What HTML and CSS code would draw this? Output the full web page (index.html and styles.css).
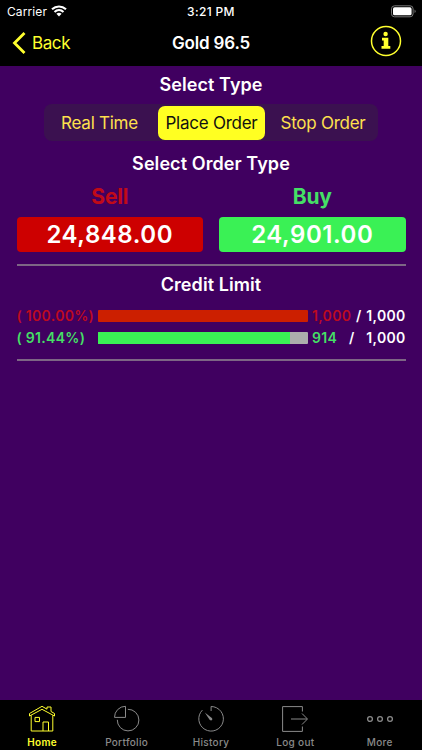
FILE: index.html
```
<!DOCTYPE html>
<html lang="en">
<head>
    <meta charset="UTF-8">
    <meta name="viewport" content="width=device-width, initial-scale=1.0">
    <title>Gold 96.5</title>
    <link rel="stylesheet" href="styles.css">
</head>
<body>
    <header>
        <div class="status-bar">
            <div class="carrier">
                <span>Carrier</span>
                <svg width="16" height="12" viewBox="0 0 16 12" fill="none" stroke="#fff" stroke-width="2.1">
                    <path d="M1 4.3C5 .5 11 .5 15 4.3M3.5 7C6.2 4.5 9.8 4.5 12.5 7"/>
                    <path d="M5.4 8.8C7 7.5 9 7.5 10.6 8.8L8 11.5Z" fill="#fff" stroke="none"/>
                </svg>
            </div>
            <span class="time">3:21 PM</span>
            <svg class="battery" width="26" height="13" viewBox="0 0 26 13">
                <rect x=".5" y=".8" width="21.6" height="11" rx="3" fill="none" stroke="#777"/>
                <rect x="2" y="2.3" width="18.6" height="8" rx="1.6" fill="#fff"/>
                <path d="M23.6 4.5q2 1.8 0 3.6z" fill="#888"/>
            </svg>
        </div>
        <nav class="nav-bar">
            <a class="back" href="#">
                <svg width="14" height="22" viewBox="0 0 14 22" fill="none" stroke="#ffff2e" stroke-width="2.8">
                    <path d="M12.5 1L2.5 11L12.5 21"/>
                </svg>
                <span>Back</span>
            </a>
            <h1>Gold 96.5</h1>
            <a class="info" href="#">
                <svg width="32" height="32" viewBox="0 0 32 32">
                    <circle cx="16" cy="16" r="14.5" fill="none" stroke="#ffff2e" stroke-width="1.5"/>
                    <circle cx="15.6" cy="9" r="2.2" fill="#ffff2e"/>
                    <path d="M12 12.8h6.3v8.2h2v2.7h-8.8V21h2.2v-5.5H12z" fill="#ffff2e"/>
                </svg>
            </a>
        </nav>
    </header>

    <main>
        <h2 class="type-title">Select Type</h2>
        <div class="segments">
            <a class="segment real" href="#">Real Time</a>
            <a class="segment active" href="#">Place Order</a>
            <a class="segment stop" href="#">Stop Order</a>
        </div>

        <h2 class="order-title">Select Order Type</h2>
        <div class="prices">
            <div class="price sell">
                <h3>Sell</h3>
                <a class="button" href="#">24,848.00</a>
            </div>
            <div class="price buy">
                <h3>Buy</h3>
                <a class="button" href="#">24,901.00</a>
            </div>
        </div>

        <section class="credit">
            <h2>Credit Limit</h2>
            <div class="limit red">
                <span class="percent">( 100.00%)</span>
                <div class="bar"><div class="fill" style="width: 100%"></div></div>
                <span class="used">1,000</span>
                <span class="slash">/</span>
                <span class="total">1,000</span>
            </div>
            <div class="limit green">
                <span class="percent">( 91.44%)</span>
                <div class="bar"><div class="fill" style="width: 91.44%"></div></div>
                <span class="used">914</span>
                <span class="slash">/</span>
                <span class="total">1,000</span>
            </div>
        </section>
    </main>

    <footer class="tab-bar">
        <a class="tab active" href="#">
            <svg width="28" height="28" viewBox="0 0 28 28">
                <path d="M1.5 11V8.5L14 1.3l5 2.9V2h4v4.5l3.5 2V11L14 4.3ZM3.2 10.3V26h21.6V10.3M7 12.4h4.5v4.2H7ZM15 26v-9h5.5v9"/>
            </svg>
            <span>Home</span>
        </a>
        <a class="tab" href="#">
            <svg width="28" height="28" viewBox="0 0 28 28">
                <path d="M12.5 1.3V12.4H1.5A11 11 0 0 1 12.5 1.3Z"/>
                <path d="M14.8 4.3A10.8 10.8 0 1 1 4.3 14.8"/>
            </svg>
            <span>Portfolio</span>
        </a>
        <a class="tab" href="#">
            <svg width="28" height="28" viewBox="0 0 28 28">
                <path d="M14.1 6V1.5A12.3 12.3 0 1 1 5.4 5.1"/>
                <path d="M7.8 7.6L12.6 14.7Q14.1 16 15 15Q15.9 14 14.8 12.9Z" fill="currentColor" stroke="none"/>
            </svg>
            <span>History</span>
        </a>
        <a class="tab" href="#">
            <svg width="28" height="28" viewBox="0 0 28 28">
                <path d="M21.4 6.5V1.6H1.6V26.4H21.4V21.5M10 14H26M21 8.5L26.5 14L21 19.5"/>
            </svg>
            <span>Log out</span>
        </a>
        <a class="tab" href="#">
            <svg class="dots" width="28" height="28" viewBox="0 0 28 28">
                <circle cx="4" cy="14" r="2.4"/>
                <circle cx="14" cy="14" r="2.4"/>
                <circle cx="24" cy="14" r="2.4"/>
            </svg>
            <span>More</span>
        </a>
    </footer>
</body>
</html>
```
FILE: styles.css
```
* {
    box-sizing: border-box;
}

body {
    font-family: Inter, "Liberation Sans", sans-serif;
    background-color: #400060;
    color: #fff;
    margin: 0;
    height: 750px;
    display: flex;
    flex-direction: column;
    overflow: hidden;
}

a {
    color: #ffff2e;
    text-decoration: none;
}

h1, h2, h3 {
    margin: 0;
    font-weight: 600;
    text-align: center;
}

header {
    background-color: #000;
    height: 66px;
}

.status-bar {
    display: grid;
    grid-template-columns: 1fr auto 1fr;
    align-items: center;
    height: 22px;
    padding: 0 6px;
    font-size: 12px;
}

.carrier {
    display: flex;
    align-items: center;
    gap: 4px;
    padding-left: 1px;
    letter-spacing: 0.1px;
}

.time {
    font-weight: 500;
    letter-spacing: 0.35px;
}

.battery {
    justify-self: end;
    margin-right: -1px;
}

.nav-bar {
    display: grid;
    grid-template-columns: 1fr auto 1fr;
    align-items: center;
    height: 42px;
    padding: 0 12px;
}

.back {
    display: flex;
    align-items: center;
    gap: 6px;
    font-size: 17px;
    letter-spacing: -0.4px;
}

.nav-bar h1 {
    font-size: 17px;
    letter-spacing: -0.15px;
}

.info {
    justify-self: end;
    height: 36px;
    margin-right: 8px;
}

main {
    flex: 1;
    padding: 0 16.5px;
}

h2 {
    font-size: 18px;
    line-height: 22px;
    letter-spacing: 0.08px;
}

.type-title {
    margin-top: 8px;
}

.segments {
    display: grid;
    grid-template-columns: 111px 112px 111px;
    align-items: center;
    width: 334px;
    height: 37px;
    margin: 8px auto 0;
    background-color: #3b1150;
    border-radius: 8px;
}

.segment {
    font-size: 17px;
    text-align: center;
    letter-spacing: -0.25px;
    color: #ffe04d;
}

.segment.stop {
    padding-left: 1px;
}

.segment.active {
    height: 34px;
    line-height: 34px;
    margin: 0 2px 0 3px;
    color: #111;
    background-color: #ffff22;
    border-radius: 7px;
}

.order-title {
    margin-top: 12px;
}

.prices {
    display: grid;
    grid-template-columns: 1fr 1fr;
    gap: 16px;
    margin-top: 9px;
}

.price h3 {
    font-size: 21px;
    font-weight: 700;
    line-height: 26px;
    letter-spacing: -0.2px;
    margin-bottom: 7px;
}

.price .button {
    display: block;
    height: 34.5px;
    line-height: 35px;
    border-radius: 4px;
    color: #fff;
    font-size: 24px;
    font-weight: 600;
    letter-spacing: 0.55px;
    text-align: center;
}

.sell h3 {
    color: #c00a18;
}

.sell .button {
    background-color: #cd0000;
}

.buy h3 {
    color: #45df66;
}

.buy .button {
    background-color: #3af155;
}

.credit {
    height: 97px;
    margin-top: 12.5px;
    padding-top: 7.5px;
    border-top: 2px solid #7d6685;
    border-bottom: 2px solid #7d6685;
}

.limit {
    display: grid;
    grid-template-columns: 81.5px 210px 48px 1fr auto;
    align-items: center;
    height: 22px;
    font-size: 14px;
    font-weight: 600;
    line-height: 16px;
    letter-spacing: 0.3px;
}

.limit.red {
    margin-top: 9.5px;
}

.bar {
    height: 12.5px;
    background-color: #adadad;
    border-radius: 1px;
    overflow: hidden;
}

.fill {
    height: 100%;
}

.used {
    padding-left: 4px;
}

.green .slash {
    margin-left: -7px;
}

.red .percent, .red .used {
    color: #bd0a20;
}

.red .fill {
    background-color: #cc1f00;
}

.green .percent, .green .used {
    color: #45df66;
}

.green .fill {
    background-color: #3af155;
}

.tab-bar {
    display: grid;
    grid-template-columns: repeat(5, 1fr);
    height: 50px;
    padding-top: 5px;
    background-color: #000;
}

.tab {
    display: flex;
    flex-direction: column;
    align-items: center;
    gap: 3px;
    color: #8a8a8a;
    font-size: 10px;
    font-weight: 500;
    line-height: 12px;
    letter-spacing: 0.3px;
}

.tab svg {
    fill: none;
    stroke: currentColor;
    stroke-width: 1;
}

.tab .dots {
    stroke-width: 1.3;
}

.tab.active {
    color: #ffff2e;
    font-weight: 600;
}
```
